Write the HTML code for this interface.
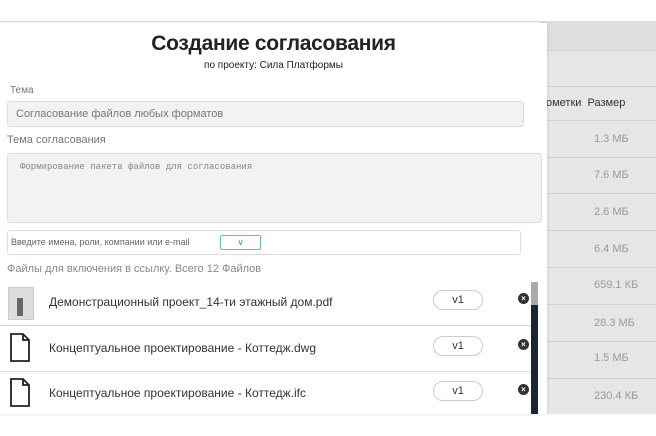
<!DOCTYPE html><html><head><meta charset="utf-8"><style>
body{margin:0;width:656px;height:436px;position:relative;overflow:hidden;background:#fff;font-family:"Liberation Sans",sans-serif}
.bg{position:absolute;left:540px;top:22px;width:116px;height:392px;background:#e6e6e6}
.hl{position:absolute;left:540px;width:116px;height:1px;background:#d2d2d2}
.sz{position:absolute;left:594px;font-size:11px;color:#999}
.m{position:absolute;left:0;top:23px;width:547px;height:391px;background:#fff;box-shadow:0 0 3px rgba(0,0,0,.15)}
.t{position:absolute;font-size:12px}
.box{position:absolute;background:#f2f2f2;border:1px solid #ddd;border-radius:3px}
.row{position:absolute;left:0;width:531px;height:45px;border-bottom:1px solid #ddd}
.fn{position:absolute;left:49px;top:15px;font-size:12px;color:#333}
.v{position:absolute;left:433px;top:10px;width:48px;height:18px;border:1px solid #ccc;border-radius:10px;font-size:11px;text-align:center;line-height:18px;color:#333}
.x{position:absolute;left:518px;top:13px;width:11px;height:11px;border-radius:50%;background:#333;color:#fff;font-size:8px;text-align:center;line-height:11px;font-weight:bold}
</style></head><body>
<div style="position:absolute;left:0;top:21px;width:656px;height:1px;background:#ddd"></div>
<div class="bg"></div>
<div style="position:absolute;left:540px;top:22px;width:116px;height:28px;background:#dedede"></div>
<div class="hl" style="top:50px"></div><div class="hl" style="top:86px"></div><div class="hl" style="top:120px"></div><div class="hl" style="top:157px"></div><div class="hl" style="top:193px"></div><div class="hl" style="top:230px"></div><div class="hl" style="top:267px"></div><div class="hl" style="top:304px"></div><div class="hl" style="top:341px"></div><div class="hl" style="top:378px"></div>
<div class="sz" style="top:97px;left:546px;color:#333">ометки&nbsp; Размер</div>
<div class="sz" style="top:133px">1.3 МБ</div>
<div class="sz" style="top:169px">7.6 МБ</div>
<div class="sz" style="top:206px">2.6 МБ</div>
<div class="sz" style="top:243px">6.4 МБ</div>
<div class="sz" style="top:279px">659.1 КБ</div>
<div class="sz" style="top:317px">28.3 МБ</div>
<div class="sz" style="top:352px">1.5 МБ</div>
<div class="sz" style="top:390px">230.4 КБ</div>
<div class="m">
<div class="t" style="left:0;width:547px;text-align:center;top:9px;font-size:21px;color:#222;font-weight:bold;letter-spacing:-0.3px">Создание согласования</div>
<div class="t" style="left:0;width:547px;text-align:center;top:37px;font-size:10px;color:#222">по проекту: Сила Платформы</div>
<div class="t" style="left:10px;top:62px;font-size:10px;color:#777">Тема</div>
<div class="box" style="left:7px;top:78px;width:515px;height:24px"><span style="position:absolute;left:8px;top:6px;font-size:11px;color:#777">Согласование файлов любых форматов</span></div>
<div class="t" style="left:7px;top:111px;font-size:11px;color:#777">Тема согласования</div>
<div class="box" style="left:7px;top:130px;width:533px;height:68px"><span style="position:absolute;left:12px;top:8px;font-size:9px;color:#888;font-family:'Liberation Mono',monospace">Формирование пакета файлов для согласования</span></div>
<div class="box" style="left:7px;top:207px;width:512px;height:23px;background:#fff"><span style="position:absolute;left:3px;top:6px;font-size:9px;color:#666">Введите имена, роли, компании или e-mail</span>
<div style="position:absolute;left:212px;top:4px;width:39px;height:13px;border:1px solid #6bc;border-radius:2px;text-align:center;font-size:9px;line-height:13px;color:#39c">&#8744;</div></div>
<div class="t" style="left:7px;top:240px;font-size:11px;color:#888">Файлы для включения в ссылку. Всего 12 Файлов</div>
<div class="row" style="top:257px"><div style="position:absolute;left:8px;top:7px;width:24px;height:31px;background:#ddd;border:1px solid #ccc"><div style="position:absolute;left:8px;top:10px;width:6px;height:18px;background:#666"></div></div><div class="fn">Демонстрационный проект_14-ти этажный дом.pdf</div><div class="v">v1</div><div class="x">×</div></div>
<div class="row" style="top:303px"><svg style="position:absolute;left:10px;top:7px" width="20" height="29" viewBox="0 0 20 29"><path d="M1 1H13L19 7V28H1Z M13 1V7H19" fill="none" stroke="#222" stroke-width="1.8"/></svg><div class="fn">Концептуальное проектирование - Коттедж.dwg</div><div class="v">v1</div><div class="x">×</div></div>
<div class="row" style="top:348px;border:0"><svg style="position:absolute;left:10px;top:7px" width="20" height="29" viewBox="0 0 20 29"><path d="M1 1H13L19 7V28H1Z M13 1V7H19" fill="none" stroke="#222" stroke-width="1.8"/></svg><div class="fn">Концептуальное проектирование - Коттедж.ifc</div><div class="v">v1</div><div class="x">×</div></div>
<div style="position:absolute;left:531px;top:259px;width:7px;height:132px;background:#1d2630"></div>
<div style="position:absolute;left:531px;top:259px;width:7px;height:23px;background:#aaa"></div>
</div>
</body></html>
